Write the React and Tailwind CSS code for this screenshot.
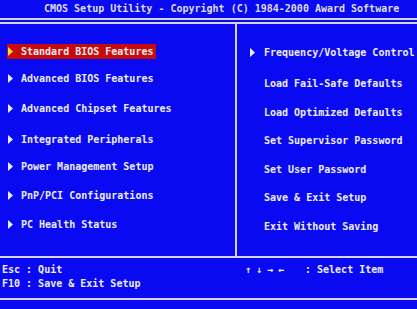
import React from 'react';

const leftItems = [
  { label: 'Standard BIOS Features', mt: 'mt-[20px]', active: true },
  { label: 'Advanced BIOS Features', mt: 'mt-[12px]' },
  { label: 'Advanced Chipset Features', mt: 'mt-[15px]' },
  { label: 'Integrated Peripherals', mt: 'mt-[16px]' },
  { label: 'Power Management Setup', mt: 'mt-[12px]' },
  { label: 'PnP/PCI Configurations', mt: 'mt-[14px]' },
  { label: 'PC Health Status', mt: 'mt-[14px]' },
];

const rightItems = [
  { label: 'Frequency/Voltage Control', mt: 'mt-[21px]', arrow: true },
  { label: 'Load Fail-Safe Defaults', mt: 'mt-[16px]' },
  { label: 'Load Optimized Defaults', mt: 'mt-[14px]' },
  { label: 'Set Supervisor Password', mt: 'mt-[13px]' },
  { label: 'Set User Password', mt: 'mt-[14px]' },
  { label: 'Save & Exit Setup', mt: 'mt-[13px]' },
  { label: 'Exit Without Saving', mt: 'mt-[14px]' },
];

function Arrow({ color = '#ececf4' }) {
  return (
    <svg width="5" height="9" viewBox="0 0 5 9" className="shrink-0">
      <polygon points="0,0 5,4.5 0,9" fill={color} />
    </svg>
  );
}

export default function App() {
  return (
    <div
      className="w-[417px] h-[309px] bg-[#0a0af2] text-[#ececf4] font-bold text-[10px] overflow-hidden flex flex-col"
      style={{ fontFamily: '"DejaVu Sans Mono", "Liberation Mono", monospace' }}
    >
      {/* Title */}
      <div className="h-[18px] flex items-center pl-[44px] leading-none whitespace-nowrap text-[#dcdcec]">
        CMOS Setup Utility - Copyright (C) 1984-2000 Award Software
      </div>
      <div className="h-[2px] bg-[#d4d4ec]" />
      <div className="h-[2px]" />
      <div className="h-[2px] bg-[#d4d4ec]" />

      {/* Menus */}
      <div className="h-[232px] flex">
        <div className="w-[235px] flex flex-col">
          {leftItems.map((it) => (
            <div key={it.label} className={`${it.mt} h-[15px] flex`}>
              <div
                className={`ml-[7px] h-[15px] flex items-center pl-[1px] pr-[3px] whitespace-nowrap ${
                  it.active ? 'bg-[#c80a0a]' : ''
                }`}
              >
                <Arrow color={it.active ? '#f4e23c' : '#ececf4'} />
                <span className="ml-[8px] leading-[15px]">{it.label}</span>
              </div>
            </div>
          ))}
        </div>
        <div className="w-[2px] bg-[#d4d4ec]" />
        <div className="flex-1 flex flex-col">
          {rightItems.map((it) => (
            <div key={it.label} className={`${it.mt} h-[15px] flex items-center whitespace-nowrap`}>
              <div className="w-[27px] pl-[13px] flex items-center">
                {it.arrow && <Arrow />}
              </div>
              <span className="leading-[15px]">{it.label}</span>
            </div>
          ))}
        </div>
      </div>

      {/* Footer */}
      <div className="h-[2px] bg-[#d4d4ec]" />
      <div className="h-[40px] flex pt-[5px]">
        <div className="w-[237px] pl-[2px] leading-[14px] whitespace-nowrap">
          <div>Esc : Quit</div>
          <div>F10 : Save &amp; Exit Setup</div>
        </div>
        <div className="flex leading-[14px] whitespace-nowrap">
          <span className="ml-[8px] w-[60px] tracking-[5px]">↑↓→←</span>
          <span>: Select Item</span>
        </div>
      </div>
      <div className="h-[2px] bg-[#d4d4ec]" />
    </div>
  );
}
